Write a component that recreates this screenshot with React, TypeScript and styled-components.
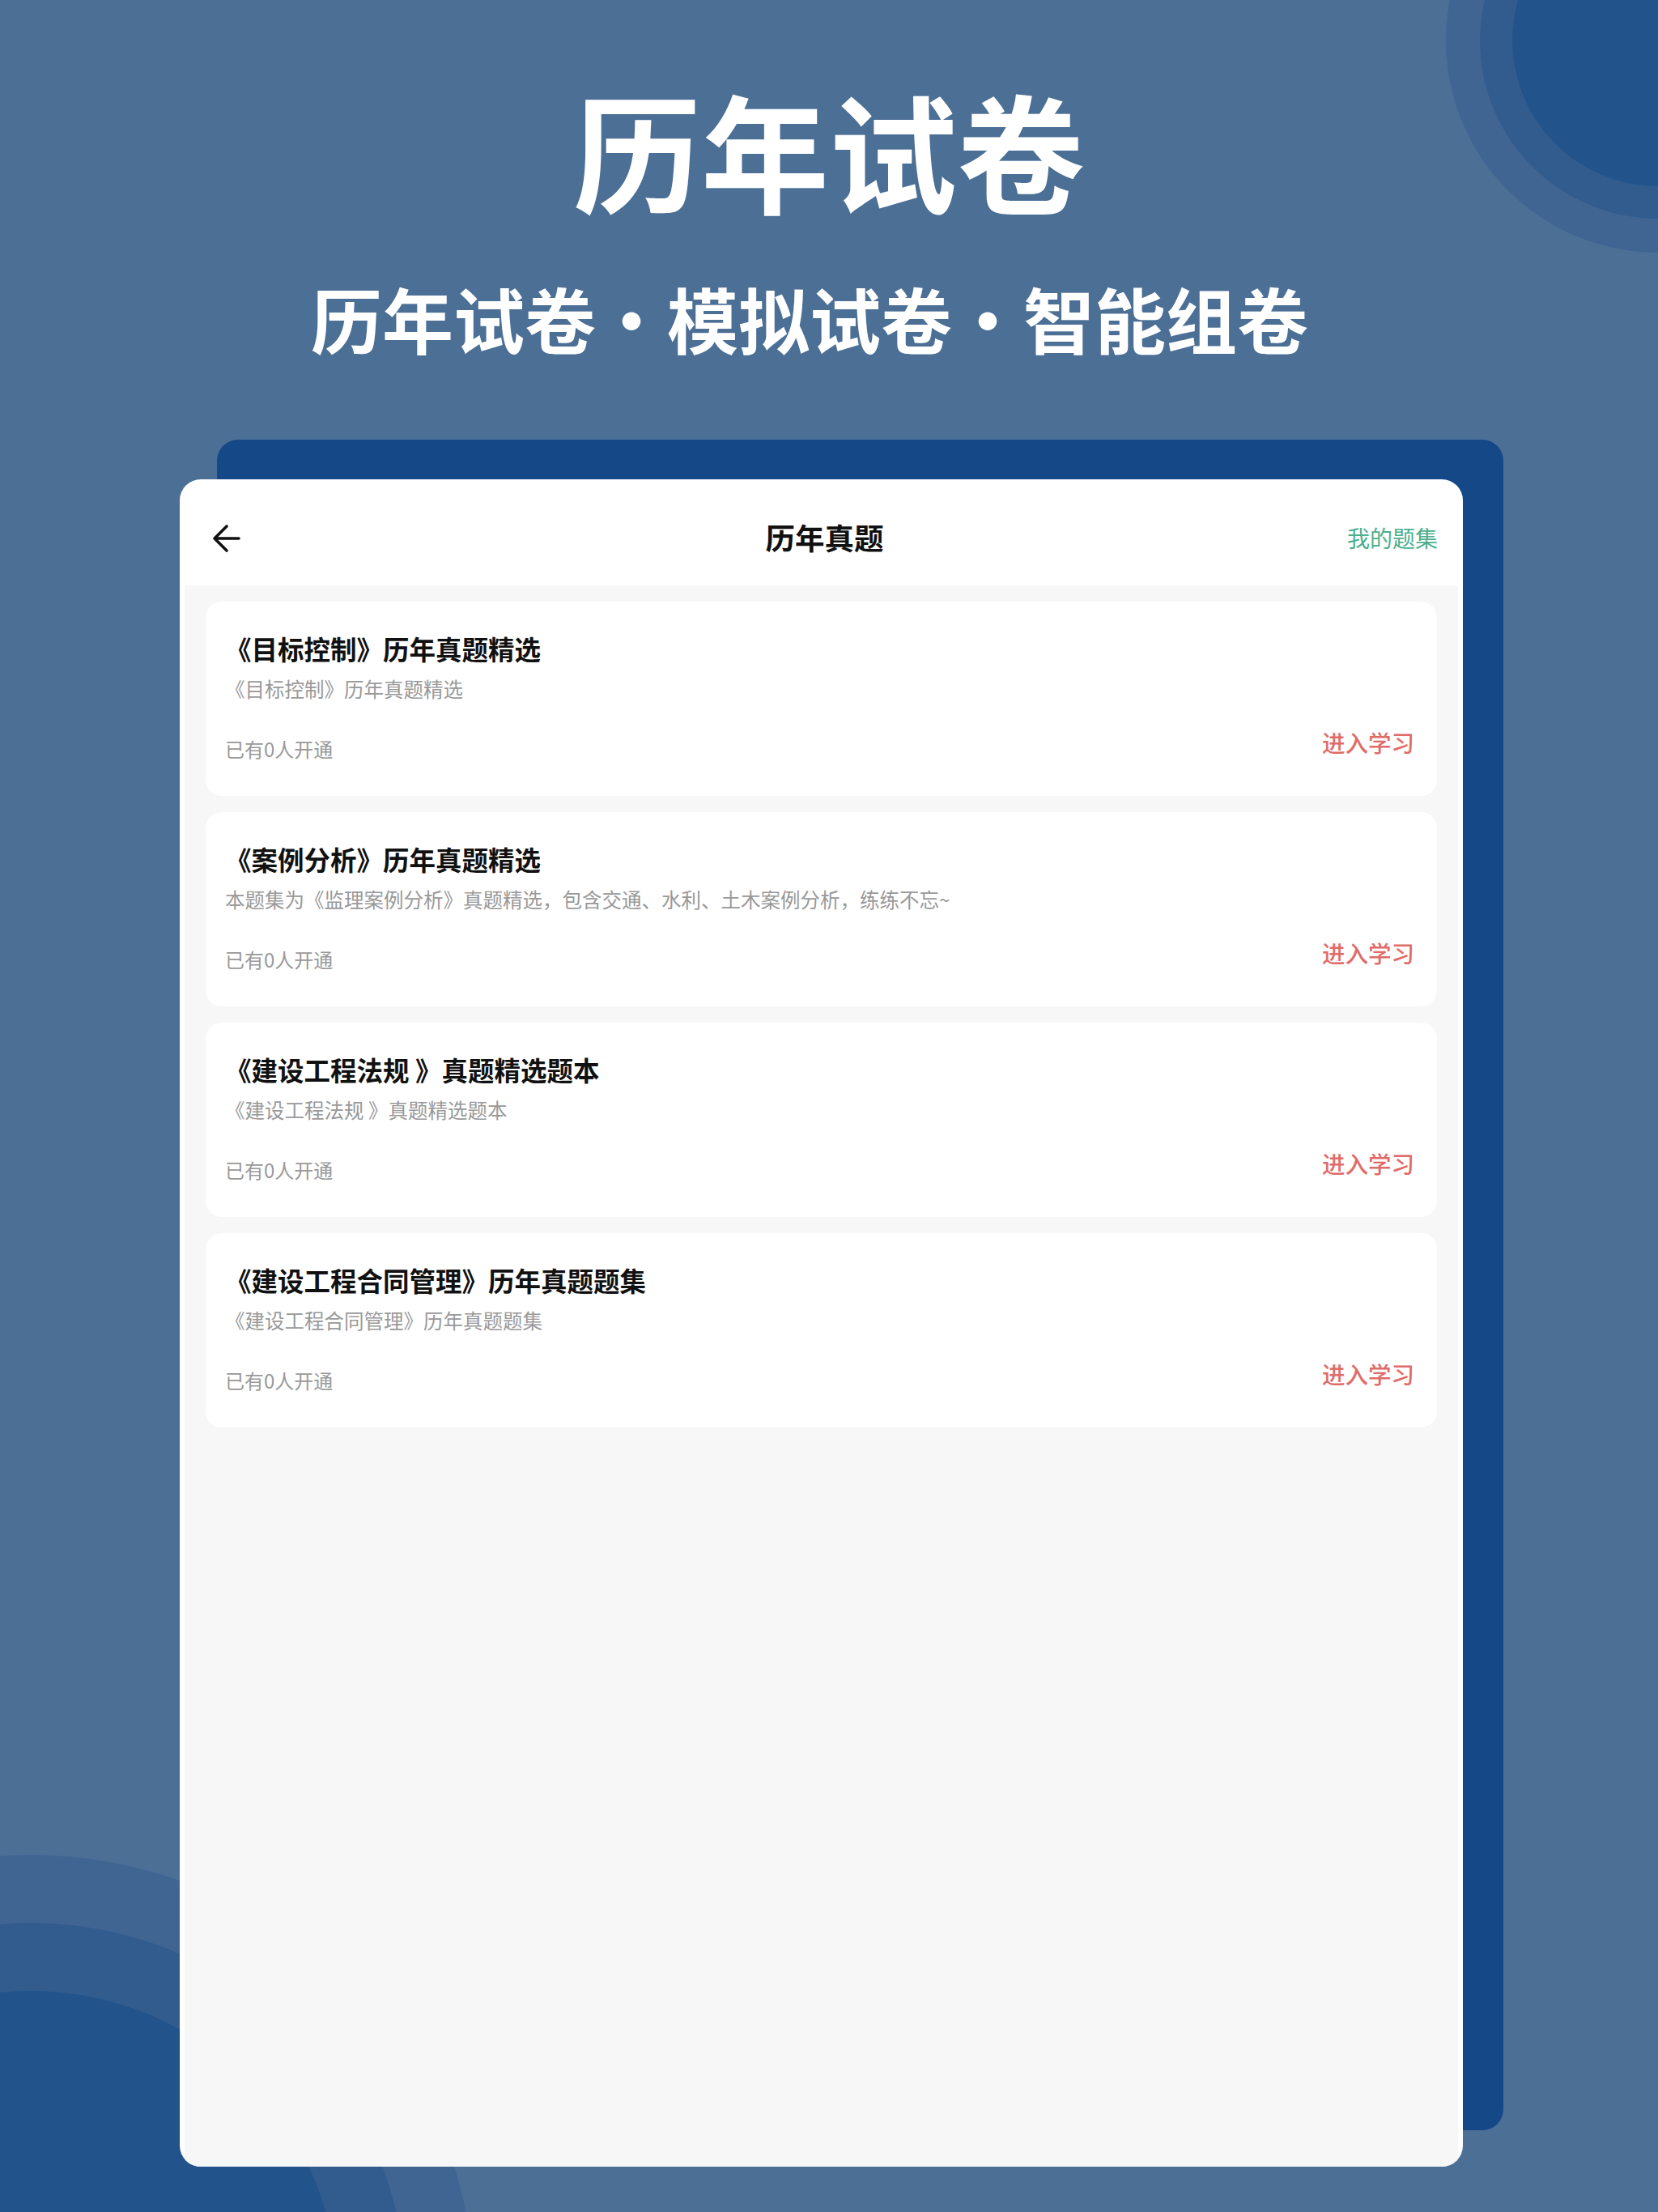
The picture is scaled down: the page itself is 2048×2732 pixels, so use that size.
import React from "react";
import styled, { createGlobalStyle } from "styled-components";

const GlobalStyle = createGlobalStyle`
  html, body { margin: 0; padding: 0; background: #4c6f96; }
  * { box-sizing: border-box; }
`;

const Page = styled.div`
  width: 2048px;
  height: 2732px;
  overflow: hidden;
  display: flex;
  flex-direction: column;
  padding-top: 84px;
  font-family: "Noto Sans CJK SC", "Noto Sans", sans-serif;
  background:
    radial-gradient(circle at 2048px 50px, #22548b 0 179.5px, #325c8e 180.5px 219.5px, #416593 220.5px 261.5px, transparent 262.5px),
    radial-gradient(circle at 38px 2839px, #22538b 0 379.5px, #325c8e 380.5px 463.5px, #416593 464.5px 547.5px, transparent 548.5px),
    #4c6f96;
`;

const Hero = styled.h1`
  margin: 0;
  color: #fff;
  font-size: 158px;
  line-height: 200px;
  font-weight: 700;
  text-align: center;
`;

const Tagline = styled.h2`
  margin: 53px 0 0;
  padding-right: 48px;
  color: #fff;
  font-size: 88px;
  line-height: 110px;
  font-weight: 700;
  text-align: center;
`;

const Dot = styled.span`
  display: inline-block;
  width: 88px;
  text-align: center;
`;

const Stage = styled.div`
  margin: 96px 0 0 222px;
  width: 1635px;
  display: grid;
  > * { grid-area: 1 / 1; }
`;

const BackCard = styled.div`
  margin-left: 46px;
  height: 2088px;
  background: #154886;
  border-radius: 26px;
`;

const Device = styled.div`
  margin-top: 49px;
  width: 1585px;
  height: 2084px;
  background: #fff;
  border-radius: 26px;
  overflow: hidden;
  display: flex;
  flex-direction: column;
`;

const NavBar = styled.div`
  height: 131px;
  padding: 15px 31px 3px 39px;
  display: grid;
  grid-template-columns: 1fr auto 1fr;
  align-items: center;
`;

const BackButton = styled.button`
  justify-self: start;
  border: 0;
  padding: 0;
  background: transparent;
  display: flex;
  width: 40px;
  height: 40px;
  align-items: center;
  margin-top: 3px;
`;

const NavTitle = styled.div`
  font-size: 36.5px;
  font-weight: 700;
  color: #111;
`;

const NavAction = styled.div`
  justify-self: end;
  font-size: 28px;
  color: #4daf8c;
`;

const List = styled.div`
  flex: 1;
  margin: 0 6px;
  background: #f7f7f7;
  padding: 20px 26px 0 26px;
  display: flex;
  flex-direction: column;
  gap: 20px;
`;

const Card = styled.div`
  background: #fff;
  border-radius: 20px;
  padding: 37px 28px 32px 24px;
`;

const CardTitle = styled.div`
  font-size: 32.5px;
  line-height: 42px;
  font-weight: 700;
  color: #111;
`;

const CardDesc = styled.div`
  margin-top: 11px;
  font-size: 24.5px;
  line-height: 36px;
  color: #999;
`;

const CardFooter = styled.div`
  margin-top: 30px;
  height: 52px;
  display: flex;
  justify-content: space-between;
  align-items: center;
`;

const Count = styled.span`
  font-size: 24px;
  line-height: 52px;
  color: #999;
`;

const Enter = styled.span`
  font-size: 28.5px;
  line-height: 36px;
  font-weight: 500;
  color: #e06b68;
  margin-bottom: 16px;
`;

const items = [
  { title: "《目标控制》历年真题精选", desc: "《目标控制》历年真题精选" },
  {
    title: "《案例分析》历年真题精选",
    desc: "本题集为《监理案例分析》真题精选，包含交通、水利、土木案例分析，练练不忘~",
  },
  { title: "《建设工程法规 》真题精选题本", desc: "《建设工程法规 》真题精选题本" },
  { title: "《建设工程合同管理》历年真题题集", desc: "《建设工程合同管理》历年真题题集" },
];

export default function App() {
  return (
    <Page>
      <GlobalStyle />
      <Hero>历年试卷</Hero>
      <Tagline>
        历年试卷<Dot>•</Dot>模拟试卷<Dot>•</Dot>智能组卷
      </Tagline>
      <Stage>
        <BackCard />
        <Device>
          <NavBar>
            <BackButton aria-label="返回">
              <svg width="36" height="36" viewBox="0 0 36 36" fill="none">
                <path
                  d="M19 3 L4 18 L19 33 M4 18 H34"
                  stroke="#111"
                  strokeWidth="3.6"
                  strokeLinecap="round"
                  strokeLinejoin="round"
                />
              </svg>
            </BackButton>
            <NavTitle>历年真题</NavTitle>
            <NavAction>我的题集</NavAction>
          </NavBar>
          <List>
            {items.map((it) => (
              <Card key={it.title}>
                <CardTitle>{it.title}</CardTitle>
                <CardDesc>{it.desc}</CardDesc>
                <CardFooter>
                  <Count>已有0人开通</Count>
                  <Enter>进入学习</Enter>
                </CardFooter>
              </Card>
            ))}
          </List>
        </Device>
      </Stage>
    </Page>
  );
}
